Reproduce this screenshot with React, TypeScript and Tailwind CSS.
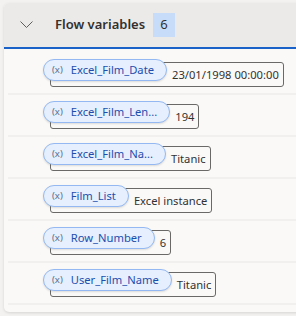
const variables = [
  { name: "Excel_Film_Date", value: "23/01/1998 00:00:00" },
  { name: "Excel_Film_Len...", value: "194" },
  { name: "Excel_Film_Na...", value: "Titanic" },
  { name: "Film_List", value: "Excel instance" },
  { name: "Row_Number", value: "6" },
  { name: "User_Film_Name", value: "Titanic" },
];

const VariableRow = ({ name, value }: { name: string; value: string }) => (
  <div className="mx-[4px] flex pl-[42px] pt-[9px] pb-[6px] border-b-2 border-[#f1f0ef]">
    <div className="flex h-[25px] items-center rounded-[3px] border border-[#6b6967] pr-[4px]">
      <div className="-ml-[8px] -mt-[4px] flex h-[22px] items-center self-start rounded-full border border-[#94b9f2] bg-[#e6effd] pl-[8px] pr-[12px] shadow-[0_1px_2px_rgba(0,0,0,0.12)]">
        <span className="text-[9.5px] leading-none text-[#5a6d8c]">(x)</span>
        <span className="ml-[8px] text-[11.2px] leading-none text-[#1c4ead]">{name}</span>
      </div>
      <span className="ml-[5px] text-[11.2px] leading-none text-[#323130]">{value}</span>
    </div>
  </div>
);

export default function App() {
  return (
    <div
      className="h-[316px] w-[296px] overflow-hidden bg-[#f3f2f1] pl-[4px] pt-[3px]"
      style={{ fontFamily: '"Noto Sans", "Open Sans", sans-serif' }}
    >
      <div className="w-[310px] overflow-hidden rounded-[5px] bg-[#faf9f8] shadow-[0_1px_3px_rgba(0,0,0,0.12)]">
        {/* Header */}
        <div className="flex h-[46px] items-center border-b-2 border-[#1a62c8] bg-[#ebeae9] pl-[16px]">
          <svg width="13" height="8" viewBox="0 0 13 8" fill="none">
            <polyline points="0.5,0.5 6.5,6.5 12.5,0.5" stroke="#605e5c" strokeWidth="1" />
          </svg>
          <span className="ml-[22px] text-[13px] font-semibold text-[#323130]">Flow variables</span>
          <span className="ml-[8px] flex h-[24px] w-[22px] items-center justify-center bg-[#c7dcf8] text-[13px] text-[#323130]">
            6
          </span>
        </div>

        {/* Variables */}
        <div className="pt-[4px] pb-[7px]">
          {variables.map(v => (
            <VariableRow key={v.name} name={v.name} value={v.value} />
          ))}
        </div>
      </div>
    </div>
  );
}
